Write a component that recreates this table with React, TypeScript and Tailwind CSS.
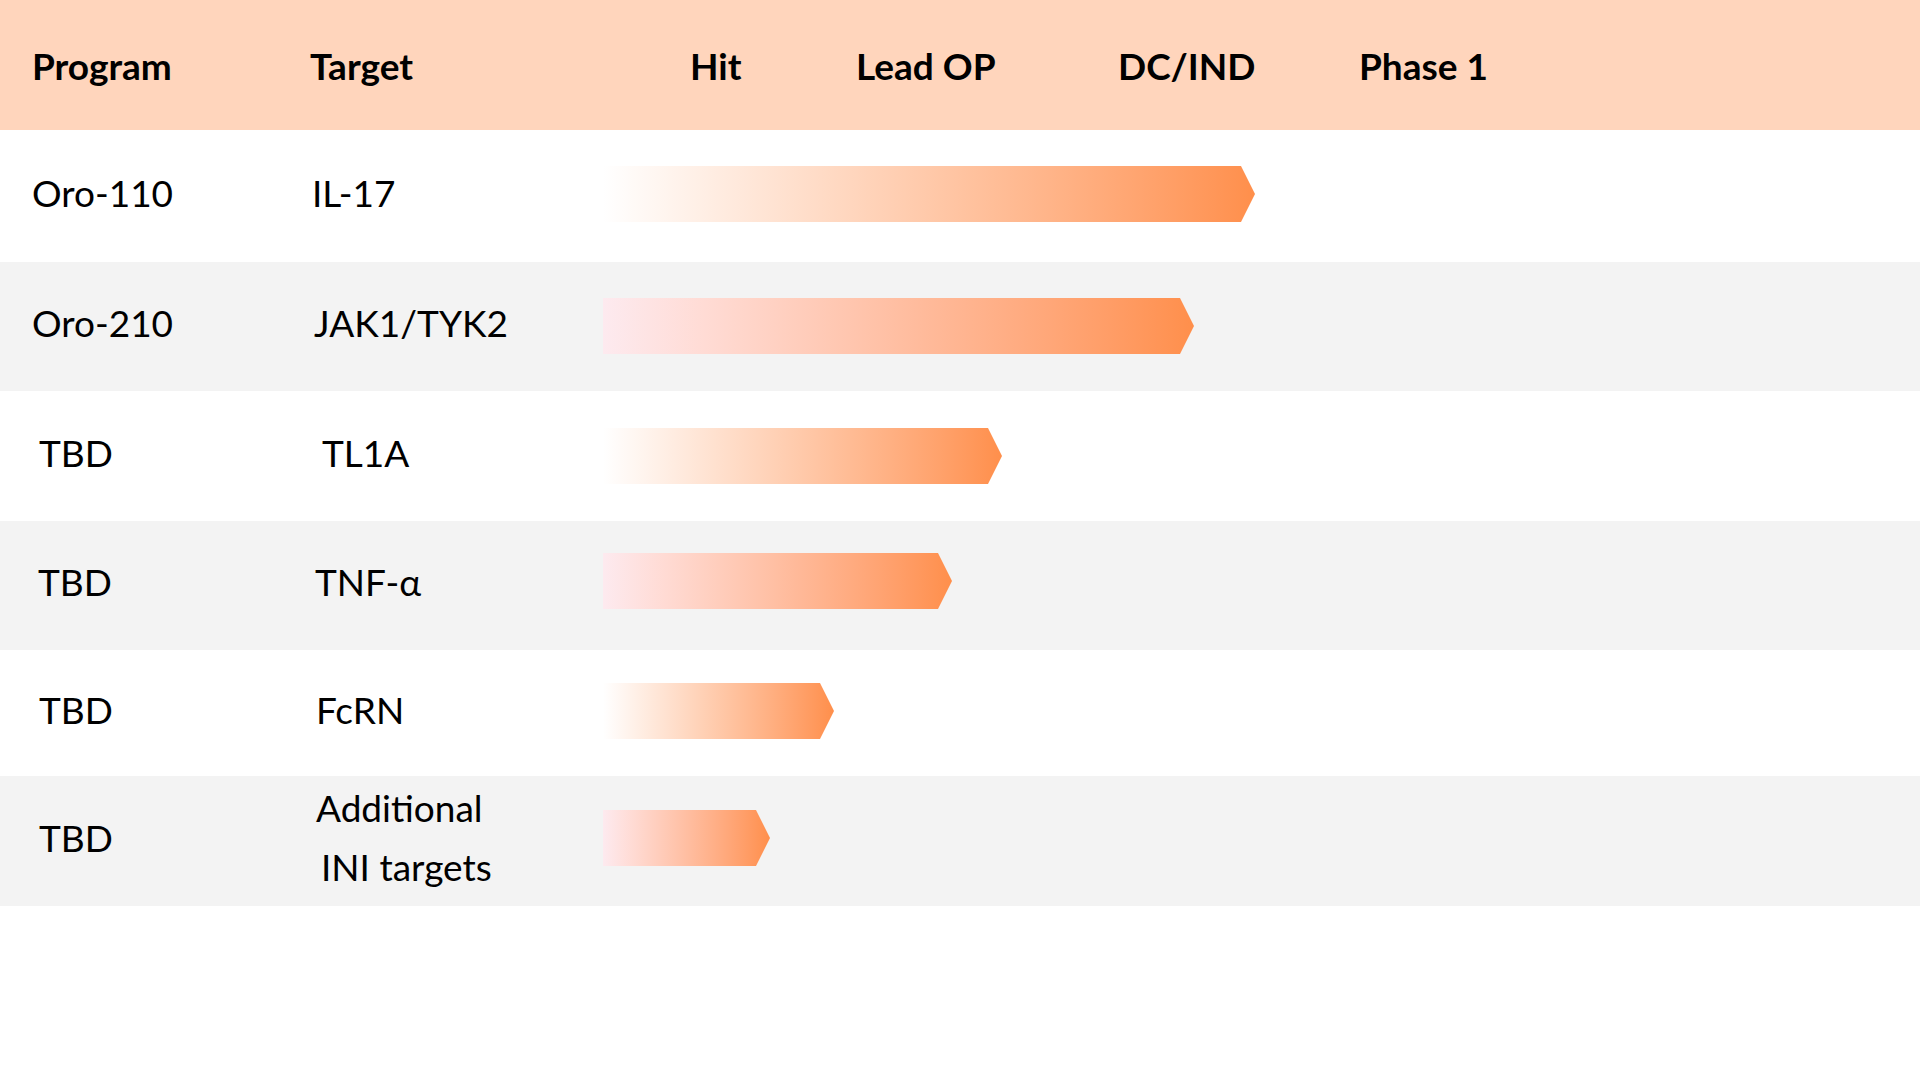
import React from 'react';

type Row = {
  program: string;
  target: string[];
  height: string;
  bg: string;
  programPad: string;
  targetPad: string;
  bar: string;
};

const rows: Row[] = [
  { program: 'Oro-110', target: ['IL-17'], height: 'h-[132px]', bg: 'bg-white', programPad: 'pl-[32px]', targetPad: 'pl-[2px]', bar: 'w-[652px] mt-[36px] from-white' },
  { program: 'Oro-210', target: ['JAK1/TYK2'], height: 'h-[129px]', bg: 'bg-[#f3f3f3]', programPad: 'pl-[32px]', targetPad: 'pl-[4px]', bar: 'w-[591px] mt-[36px] from-[#fdeaef]' },
  { program: 'TBD', target: ['TL1A'], height: 'h-[130px]', bg: 'bg-white', programPad: 'pl-[39px]', targetPad: 'pl-[12px]', bar: 'w-[399px] mt-[37px] from-white' },
  { program: 'TBD', target: ['TNF-α'], height: 'h-[129px]', bg: 'bg-[#f3f3f3]', programPad: 'pl-[38px]', targetPad: 'pl-[5px]', bar: 'w-[349px] mt-[32px] from-[#fdeaef]' },
  { program: 'TBD', target: ['FcRN'], height: 'h-[126px]', bg: 'bg-white', programPad: 'pl-[39px]', targetPad: 'pl-[6px]', bar: 'w-[231px] mt-[33px] from-white' },
  { program: 'TBD', target: ['Additional', 'INI targets'], height: 'h-[130px]', bg: 'bg-[#f3f3f3]', programPad: 'pl-[39px]', targetPad: 'pl-[6px]', bar: 'w-[167px] mt-[34px] from-[#fdeaef]' },
];

const stages = [
  { label: 'Hit', width: 'w-[166px]' },
  { label: 'Lead OP', width: 'w-[262px]' },
  { label: 'DC/IND', width: 'w-[241px]' },
  { label: 'Phase 1', width: 'w-[200px]' },
];

const Arrow = ({ className }: { className: string }) => (
  <div
    className={`h-[56px] bg-linear-to-r to-[#ff8f4b] [clip-path:polygon(0_0,calc(100%_-_14px)_0,100%_50%,calc(100%_-_14px)_100%,0_100%)] ${className}`}
  />
);

export default function App() {
  return (
    <div className="w-[1920px] h-[1080px] bg-white font-[Lato,sans-serif] text-black text-[37px] leading-none">
      <div className="flex items-center h-[130px] bg-[#ffd5bc] font-bold">
        <div className="w-[310px] pl-[32px]">Program</div>
        <div className="w-[380px]">Target</div>
        {stages.map((s) => (
          <div key={s.label} className={s.width}>
            {s.label}
          </div>
        ))}
      </div>

      {rows.map((row, i) => (
        <div key={i} className={`flex items-center pb-[8px] ${row.height} ${row.bg}`}>
          <div className={`w-[310px] ${row.programPad}`}>{row.program}</div>
          <div className={`w-[293px] ${row.targetPad} leading-[59px]`}>
            {row.target.map((t, j) => (
              <div key={j} className={j > 0 ? 'pl-[5px]' : ''}>
                {t}
              </div>
            ))}
          </div>
          <div className="self-start">
            <Arrow className={row.bar} />
          </div>
        </div>
      ))}
    </div>
  );
}
